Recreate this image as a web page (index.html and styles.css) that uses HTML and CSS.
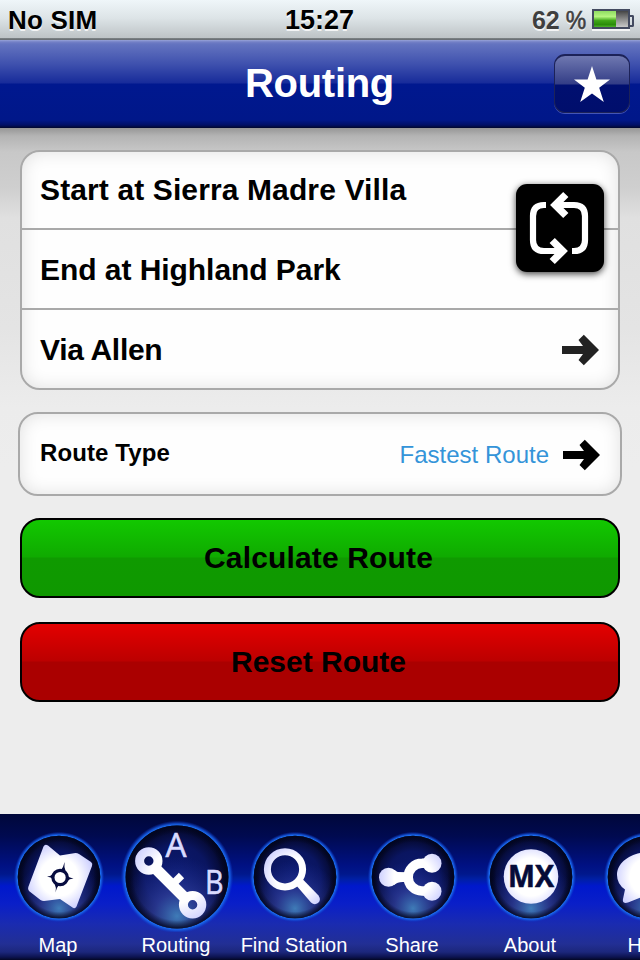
FILE: index.html
```html
<!DOCTYPE html>
<html lang="en">
<head>
  <meta charset="UTF-8" />
  <title>Routing</title>
  <meta name="viewport" content="width=device-width, initial-scale=1.0" />
  <link rel="stylesheet" href="styles.css">
</head>
<body>

<!-- shared gradients for the tab icons -->
<svg class="defs" width="0" height="0">
  <defs>
    <radialGradient id="disc" cx="50%" cy="50%" r="50%">
      <stop offset="0" stop-color="#0b1a70" />
      <stop offset="0.62" stop-color="#0a1560" />
      <stop offset="0.85" stop-color="#060c3c" />
      <stop offset="1" stop-color="#02051e" />
    </radialGradient>
    <radialGradient id="shine" cx="50%" cy="88%" r="58%">
      <stop offset="0" stop-color="#3f7cb8" />
      <stop offset="0.4" stop-color="#303f9c" stop-opacity="0.75" />
      <stop offset="1" stop-color="#1c2a90" stop-opacity="0" />
    </radialGradient>
    <radialGradient id="edge" cx="50%" cy="50%" r="50%">
      <stop offset="0.84" stop-color="#02051e" stop-opacity="0" />
      <stop offset="1" stop-color="#02051e" stop-opacity="0.85" />
    </radialGradient>
    <radialGradient id="halo" cx="50%" cy="50%" r="50%">
      <stop offset="0.92" stop-color="#1b6cf0" />
      <stop offset="0.95" stop-color="#1458e0" stop-opacity="0.75" />
      <stop offset="1" stop-color="#0a30c0" stop-opacity="0" />
    </radialGradient>
    <radialGradient id="white" gradientUnits="userSpaceOnUse" cx="59" cy="61" r="38">
      <stop offset="0" stop-color="#fff" />
      <stop offset="0.5" stop-color="#fff" />
      <stop offset="1" stop-color="#c3c6ff" />
    </radialGradient>
    <radialGradient id="whiteBig" gradientUnits="userSpaceOnUse" cx="59" cy="61" r="52">
      <stop offset="0" stop-color="#fff" />
      <stop offset="0.5" stop-color="#fff" />
      <stop offset="1" stop-color="#c3c6ff" />
    </radialGradient>
    <g id="badge">
      <circle cx="59" cy="61" r="45.3" fill="url(#halo)" />
      <circle cx="59" cy="61" r="41.3" fill="url(#disc)" />
      <circle cx="59" cy="61" r="41.3" fill="url(#shine)" />
      <circle cx="59" cy="61" r="41.3" fill="url(#edge)" />
    </g>
  </defs>
</svg>

<div class="screen">
  <div class="status-bar">
    <span class="carrier">No SIM</span>
    <span class="time">15:27</span>
    <span class="power">
      <span class="percent">62<i>%</i></span>
      <span class="battery"><span class="charge"></span></span>
    </span>
  </div>

  <header class="nav-bar">
    <h1>Routing</h1>
    <button class="fav" title="Favourites">
      <svg width="36" height="36" viewBox="0 0 36 36">
        <path d="M18 0 L22.4 13.4 L36 13.4 L25.2 21.8 L29.8 36 L18 27.4 L6.2 36 L10.8 21.8 L0 13.4 L13.6 13.4 Z" fill="#fff" />
      </svg>
    </button>
  </header>

  <main class="content">
    <div class="card stops">
      <div class="row start">Start at Sierra Madre Villa</div>
      <div class="row end">End at Highland Park</div>
      <div class="row via">
        Via Allen
        <svg class="arrow" width="38" height="32" viewBox="0 0 38 32">
          <path d="M0 12 H21 L16.5 6 L21.8 0.8 L37 16 L21.8 31.2 L16.5 26 L21 20 H0 Z" fill="#222" />
        </svg>
      </div>
      <button class="swap" title="Swap start and end">
        <svg width="88" height="88" viewBox="0 0 88 88" fill="none" stroke="#fff" stroke-width="6.2">
          <path d="M30 21 H28 Q17 21 17 32 V56 Q17 67 28 67 H46" />
          <path d="M56 67 H58 Q69 67 69 56 V32 Q69 21 58 21 H40" />
          <path d="M49.8 10.5 L39.3 21 L49.8 31.5" stroke-width="7.4" />
          <path d="M36.2 56.5 L46.7 67 L36.2 77.5" stroke-width="7.4" />
        </svg>
      </button>
    </div>

    <div class="card type">
      <span class="type-name">Route Type</span>
      <span class="type-value">Fastest Route</span>
      <svg class="arrow" width="38" height="32" viewBox="0 0 38 32">
        <path d="M0 12 H21 L16.5 6 L21.8 0.8 L37 16 L21.8 31.2 L16.5 26 L21 20 H0 Z" fill="#000" />
      </svg>
    </div>

    <button class="btn calculate">Calculate Route</button>
    <button class="btn reset">Reset Route</button>
  </main>

  <nav class="tab-bar">
    <a class="tab">
      <svg width="118" height="116" viewBox="0 0 118 116">
        <use href="#badge" />
        <path d="M43.5 30.5 Q45 27.5 48 29.5 L60 39.5 L75.5 37 Q77.5 37 79 38 L91 46 Q93 47.5 92 50 L76.5 90.5 Q75 93.5 72.5 91.5 L60 83 L44 85 Q42 85 40.5 84 L29 75 Q27.5 73.5 28.3 71 Z" fill="url(#white)" />
        <g fill="#070d40">
          <path d="M64.6 46 Q63.8 51 65.6 55 L60.6 54.6 Q63.6 51 64.6 46 Z" />
          <path d="M73.5 62.4 Q69.5 62.6 66.8 65.4 L67 59.8 Q69.5 62 73.5 62.4 Z" />
          <path d="M55.6 76.5 Q56.4 71 54.6 67.8 L59.6 68.4 Q56.6 71 55.6 76.5 Z" />
          <path d="M47 60.6 Q51 60.4 53.4 57.6 L53.4 63.4 Q51 61 47 60.6 Z" />
        </g>
        <circle cx="60.1" cy="61.5" r="7.2" fill="none" stroke="#070d40" stroke-width="3.2" />
      </svg>
      <span>Map</span>
    </a>
    <a class="tab active">
      <svg width="118" height="116" viewBox="0 0 118 116">
        <g transform="translate(59 61) scale(1.245) translate(-59 -61)">
          <use href="#badge" />
        </g>
        <path d="M35 50 L69 84" stroke="url(#whiteBig)" stroke-width="11" />
        <path d="M55 68 L63.5 59.5" stroke="#fff" stroke-width="7.5" />
        <circle cx="30.8" cy="45" r="9.2" fill="none" stroke="url(#whiteBig)" stroke-width="9" />
        <circle cx="74.6" cy="88.8" r="9.2" fill="none" stroke="url(#whiteBig)" stroke-width="9" />
        <text class="ab" x="47.5" y="41.3" textLength="21" lengthAdjust="spacingAndGlyphs">A</text>
        <text class="ab" x="87" y="77.7" textLength="18.5" lengthAdjust="spacingAndGlyphs">B</text>
      </svg>
      <span>Routing</span>
    </a>
    <a class="tab">
      <svg width="118" height="116" viewBox="0 0 118 116">
        <use href="#badge" />
        <path d="M59.5 68.5 L66 62.5 L82.5 79.5 Q85.5 84 82 87 Q78.5 89.5 75 86.5 Z" fill="url(#white)" />
        <circle cx="49" cy="53.3" r="17.6" fill="none" stroke="url(#white)" stroke-width="7" />
      </svg>
      <span>Find Station</span>
    </a>
    <a class="tab">
      <svg width="118" height="116" viewBox="0 0 118 116">
        <use href="#badge" />
        <path d="M36 61 H54 M76 47 L68 47.3 A13.8 13.8 0 0 0 68 75 L76 75.3" fill="none" stroke="#fff" stroke-width="9.6" />
        <path d="M40 54 Q44 57 50 56.5 V66 Q44 65.5 40 69 Z" fill="#fff" />
        <circle cx="34.5" cy="61.2" r="9.5" fill="url(#white)" />
        <circle cx="78" cy="47.2" r="9.5" fill="url(#white)" />
        <circle cx="78" cy="75.2" r="9.5" fill="url(#white)" />
      </svg>
      <span>Share</span>
    </a>
    <a class="tab">
      <svg width="118" height="116" viewBox="0 0 118 116">
        <use href="#badge" />
        <circle cx="59" cy="60.5" r="27.3" fill="url(#white)" />
        <text class="mx" x="36" y="71" textLength="46" lengthAdjust="spacingAndGlyphs">MX</text>
      </svg>
      <span>About</span>
    </a>
    <a class="tab">
      <svg width="118" height="116" viewBox="0 0 118 116">
        <use href="#badge" />
        <path d="M59 36 C73 36 87 45 87 59 C87 73 73 82 59 82 Q55 82 52 81 L38 86.6 Q32 88 33 83 L35 73.5 Q27 68 27 59 C27 45 43 36 59 36 Z" fill="url(#white)" />
      </svg>
      <span>Help</span>
    </a>
  </nav>
</div>

</body>
</html>
```
FILE: styles.css
```css
* {
  box-sizing: border-box;
}
body {
  margin: 0;
  font-family: 'Liberation Sans', Arial, sans-serif;
  background: #ededed;
  color: #000;
  overflow: hidden;
}
button {
  font-family: inherit;
  padding: 0;
  margin: 0;
  cursor: pointer;
}
svg {
  display: block;
}
.defs {
  position: absolute;
}
.screen {
  width: 640px;
  height: 960px;
  display: flex;
  flex-direction: column;
  overflow: hidden;
}

/* Status bar */
.status-bar {
  height: 40px;
  display: grid;
  grid-template-columns: 1fr auto 1fr;
  align-items: center;
  padding: 0 6px 0 8px;
  background: linear-gradient(#eff6f9, #dde4e7 18px, #bdc3c6 38px, #7f8587 38px, #646a70 40px);
  font-size: 26px;
  font-weight: bold;
  text-shadow: 0 2px 0 rgba(255, 255, 255, 0.8);
}
.carrier {
  letter-spacing: 0.2px;
}
.time {
  font-size: 27px;
  margin-right: 3px;
}
.power {
  display: flex;
  justify-content: flex-end;
  align-items: center;
  gap: 6px;
}
.percent {
  color: #3f3f3f;
  font-size: 25px;
}
.percent i {
  font-style: normal;
  font-weight: normal;
  margin-left: 4px;
  -webkit-text-stroke: 0.6px #3f3f3f;
  display: inline-block;
  transform: scaleX(0.92);
  transform-origin: right;
}
.battery {
  position: relative;
  width: 38px;
  height: 20px;
  margin-right: 4px;
  margin-bottom: 2px;
  border: 2px solid #434a60;
  background: linear-gradient(#454545, #8a8a8a 50%, #c8c8c8);
  box-shadow: 0 2px 0 rgba(255, 255, 255, 0.8);
}
.battery::after {
  content: "";
  position: absolute;
  right: -6px;
  top: 4px;
  width: 4px;
  height: 8px;
  border: 2px solid #434a60;
  border-left: none;
  border-radius: 0 2px 2px 0;
}
.charge {
  display: block;
  width: 22px;
  height: 16px;
  background: linear-gradient(#8fdc62, #b5f57f 35%, #3fa618 60%, #2a8c0a 85%, #4db32a);
}

/* Title bar */
.nav-bar {
  height: 88px;
  display: grid;
  grid-template-columns: 1fr auto 1fr;
  align-items: center;
  padding: 0 10px 0 9px;
  background: linear-gradient(#98a3d8 0, #7380c6 2px, #6474c0 4px, #3f51ae 24px, #172b9a 43px, #00188f 44px, #001789 80px, #000f66 85px, #00062b 88px);
}
.nav-bar h1 {
  grid-column: 2;
  margin: 0;
  padding: 0 0 2px;
  font-size: 40px;
  line-height: 46px;
  letter-spacing: -0.3px;
  color: #fff;
}
.fav {
  justify-self: end;
  width: 76px;
  height: 59px;
  margin-bottom: 2px;
  display: flex;
  align-items: center;
  justify-content: center;
  border: 1px solid #1c2258;
  border-top-width: 2px;
  border-radius: 11px;
  background: linear-gradient(#6f78b0, #333d86 28px, #000f70 29px, #000e6c);
  box-shadow: 0 1px 0 #4455b5;
}

/* Page */
.content {
  flex: 1;
  display: flex;
  flex-direction: column;
  padding: 22px 20px 0;
  background: linear-gradient(#969696, #b4b4b4 8px, #c8c8c8 24px, #cfcfcf 60px, #e0e0e0 90px, #e4e4e4 200px, #ececec 280px, #ededed 340px);
}
.card {
  border: 2px solid #a9a9a9;
  border-radius: 20px;
  background: #fefefe;
  box-shadow: inset 0 0 18px rgba(0, 0, 0, 0.12);
  font-weight: bold;
}
.stops {
  position: relative;
  height: 240px;
}
.row {
  height: 80px;
  display: flex;
  align-items: center;
  justify-content: space-between;
  padding: 2px 18px 0;
  font-size: 30px;
  border-bottom: 2px solid #a9a9a9;
}
.start {
  height: 78px;
  padding-top: 0;
  letter-spacing: 0.12px;
}
.end {
  letter-spacing: -0.05px;
}
.via {
  height: 78px;
  letter-spacing: -0.3px;
  border-bottom: none;
}
.swap {
  position: absolute;
  right: 14px;
  top: 32px;
  width: 88px;
  height: 88px;
  border: none;
  border-radius: 11px;
  background: #000;
  box-shadow: 0 2px 7px rgba(0, 0, 0, 0.75);
}
.type {
  height: 84px;
  margin: 22px -2px;
  padding: 2px 19px 0 20px;
  display: flex;
  align-items: center;
  font-size: 24px;
}
.type-name {
  flex: 1;
  padding-bottom: 4px;
  letter-spacing: 0.1px;
}
.type-value {
  margin-right: 14px;
  font-weight: normal;
  color: #3494d9;
}
.btn {
  height: 80px;
  flex: none;
  border: 2px solid #000;
  border-radius: 20px;
  font-size: 30px;
  font-weight: bold;
  color: #000;
  padding-right: 3px;
}
.calculate {
  background: linear-gradient(#12c800, #0faa00 37px, #0f9a00 38px, #0f9800);
  margin-bottom: 24px;
  letter-spacing: 0.15px;
}
.reset {
  background: linear-gradient(#e30000, #bc0000 37px, #aa0000 38px, #aa0000);
}

/* Tab bar */
.tab-bar {
  height: 146px;
  display: flex;
  padding-top: 2px;
  background: linear-gradient(#00073a 0, #000a50 22px, #001184 52px, #00188c 60px, #001fa4 65px, #0018cc 72px, #0a1fc8 90px, #1a2bb0 110px, #222f94 130px, #1c277c 138px, #0c1350 143px, #030725 146px);
}
.tab {
  flex: 0 0 118px;
  display: flex;
  flex-direction: column;
  align-items: center;
  color: #fff;
  font-size: 20px;
}
.tab span {
  margin-top: 1px;
  margin-right: 2px;
  line-height: 24px;
}
.ab {
  font-family: 'Open Sans', sans-serif;
  font-size: 33.5px;
  fill: #d9dbff;
  stroke: #d9dbff;
  stroke-width: 0.6px;
}
.mx {
  font-family: 'Open Sans', sans-serif;
  font-weight: bold;
  font-size: 30px;
  fill: #050b38;
  stroke: #050b38;
  stroke-width: 0.6px;
  stroke-linejoin: round;
}
```
